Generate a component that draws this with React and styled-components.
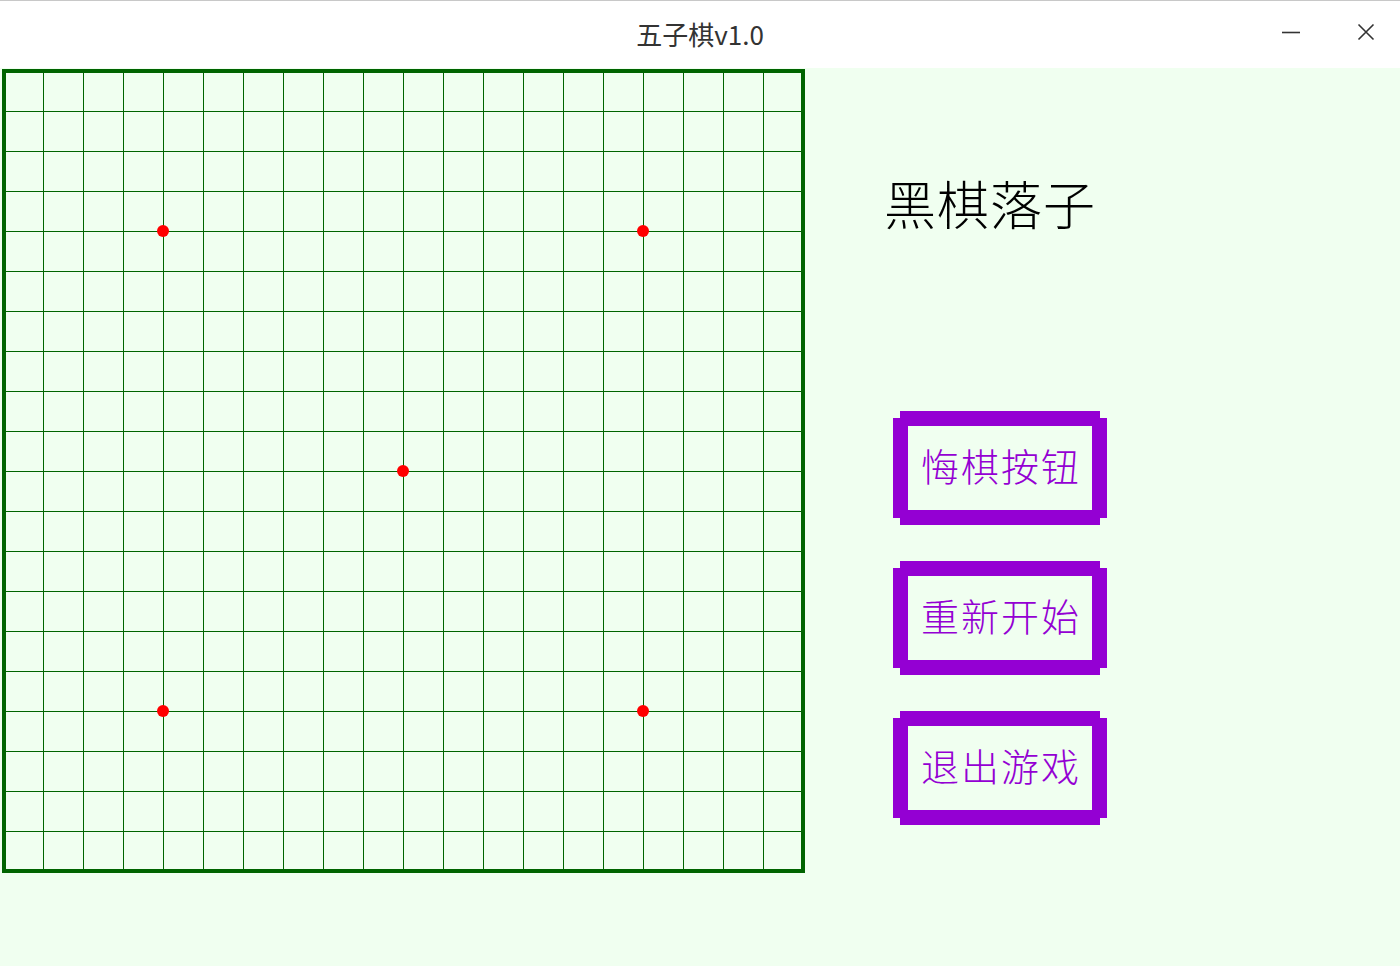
import React from 'react'
import styled, { createGlobalStyle } from 'styled-components'

const GlobalStyle = createGlobalStyle`
	html, body {
		margin: 0;
		padding: 0;
		background: #F0FFF0;
		font-family: "Noto Sans CJK SC", "Noto Sans", sans-serif;
	}
`

const GREEN = '#006400'
const PURPLE = '#9400D3'
const CELL = 40
const LINES = 21
const STARS = [[4, 4], [16, 4], [10, 10], [4, 16], [16, 16]]

const buttons = ['悔棋按钮', '重新开始', '退出游戏']

const Board = () =>
{
	const ox = 3
	const oy = 3
	const size = CELL * (LINES - 1)
	const rows = []
	for (let i = 1; i < LINES - 1; i++)
	{
		rows.push(<line key={'h' + i} x1={ox} x2={ox + size} y1={oy + i * CELL} y2={oy + i * CELL} />)
		rows.push(<line key={'v' + i} y1={oy} y2={oy + size} x1={ox + i * CELL} x2={ox + i * CELL} />)
	}
	return (
		<BoardSvg width="810" height="808" viewBox="0 0 810 808">
			<g stroke={GREEN} strokeWidth="1" shapeRendering="crispEdges">
				{rows}
			</g>
			<rect x={ox + 1} y={oy} width={size - 1} height={size} fill="none" stroke={GREEN} strokeWidth="4" shapeRendering="crispEdges" />
			{STARS.map(([c, r]) => (
				<circle key={c + '-' + r} cx={ox + c * CELL} cy={oy + r * CELL} r="6" fill="#FF0000" />
			))}
		</BoardSvg>
	)
}

const App = () =>
{
	return (
		<>
		<GlobalStyle/>
		<Window>
			<TitleBar>
				<span />
				<Title>五子棋v1.0</Title>
				<Controls>
					<WinButton aria-label="minimize">
						<svg width="20" height="20" viewBox="0 0 20 20">
							<line x1="1" y1="10.5" x2="19" y2="10.5" stroke="#333" strokeWidth="1.6" />
						</svg>
					</WinButton>
					<WinButton aria-label="close">
						<svg width="20" height="20" viewBox="0 0 20 20">
							<path d="M2.5 2.5 L17.5 17.5 M17.5 2.5 L2.5 17.5" stroke="#333" strokeWidth="1.6" fill="none" />
						</svg>
					</WinButton>
				</Controls>
			</TitleBar>
			<Main>
				<Board/>
				<SidePanel>
					<Status>黑棋落子</Status>
					<ButtonList>
						{buttons.map(b => (
							<GameButton key={b}>
								<ButtonFace>{b}</ButtonFace>
							</GameButton>
						))}
					</ButtonList>
				</SidePanel>
			</Main>
		</Window>
		</>
	)
}

const Window = styled.div`
	display: flex;
	flex-direction: column;
	width: 1400px;
	height: 966px;
	background: #F0FFF0;
	overflow: hidden;
`

const TitleBar = styled.div`
	display: grid;
	grid-template-columns: 1fr auto 1fr;
	align-items: center;
	height: 67px;
	background: #ffffff;
	border-top: 1px solid #c8c8c8;
`

const Title = styled.div`
	font-size: 26px;
	color: #333333;
	line-height: 1;
	margin-top: -2px;
`

const Controls = styled.div`
	display: flex;
	justify-self: end;
	gap: 15px;
	padding-right: 4px;
	margin-top: -6px;
`

const WinButton = styled.div`
	display: flex;
	align-items: center;
	justify-content: center;
	width: 60px;
	height: 40px;
	cursor: pointer;
`

const Main = styled.div`
	display: flex;
	flex-direction: row;
	flex: 1;
`

const BoardSvg = styled.svg`
	display: block;
	flex-shrink: 0;
`

const SidePanel = styled.div`
	display: flex;
	flex-direction: column;
	padding-top: 109px;
	padding-left: 83px;
`

const Status = styled.div`
	margin-left: -9px;
	font-size: 52px;
	line-height: 52px;
	letter-spacing: 1px;
	font-weight: 300;
	color: #000000;
	white-space: nowrap;
`

const ButtonList = styled.div`
	display: flex;
	flex-direction: column;
	gap: 36px;
	margin-top: 182px;
`

const GameButton = styled.div`
	display: flex;
	width: 214px;
	height: 114px;
	padding: 15px;
	box-sizing: border-box;
	background: ${PURPLE};
	cursor: pointer;
	clip-path: polygon(7px 0, calc(100% - 7px) 0, calc(100% - 7px) 7px, 100% 7px,
		100% calc(100% - 7px), calc(100% - 7px) calc(100% - 7px), calc(100% - 7px) 100%,
		7px 100%, 7px calc(100% - 7px), 0 calc(100% - 7px), 0 7px, 7px 7px);
`

const ButtonFace = styled.div`
	display: flex;
	flex: 1;
	align-items: center;
	justify-content: center;
	background: #F0FFF0;
	color: ${PURPLE};
	font-size: 38px;
	font-weight: 300;
	letter-spacing: 2px;
	padding-left: 2px;
	padding-bottom: 8px;
	white-space: nowrap;
`

export default App
